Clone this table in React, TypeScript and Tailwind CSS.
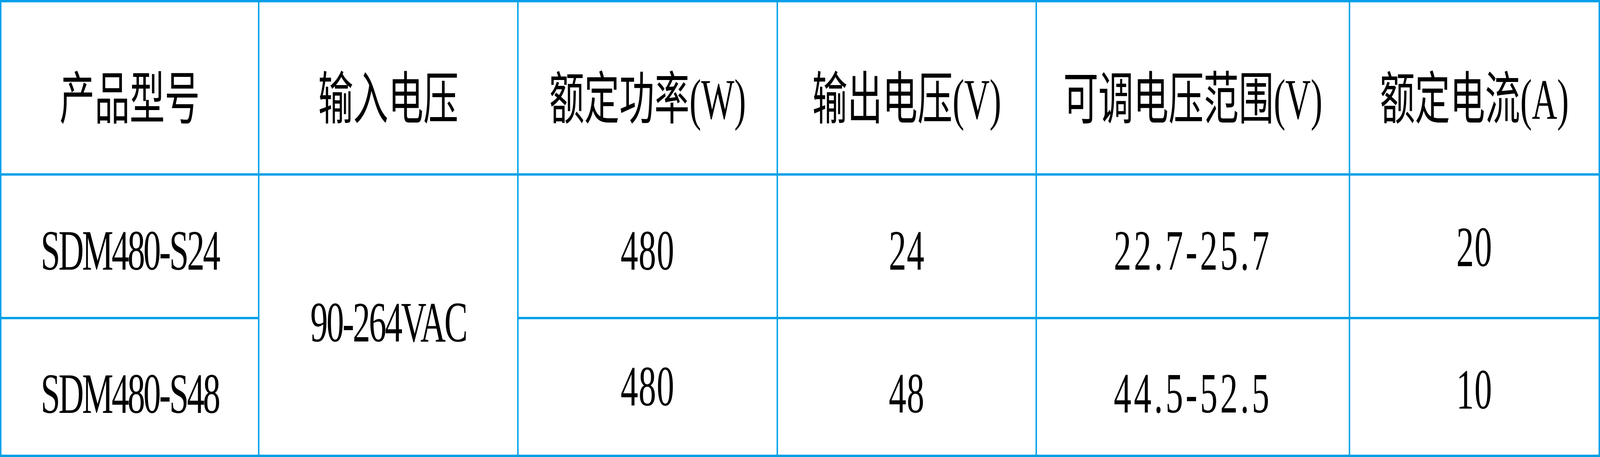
import React, { useLayoutEffect, useState } from "react"

const font = { fontFamily: '"Liberation Serif", "Noto Sans CJK SC", serif' }

const headers = ["产品型号", "输入电压", "额定功率(W)", "输出电压(V)", "可调电压范围(V)", "额定电流(A)"]

function Cell({ children, className = "" }: { children: React.ReactNode; className?: string }) {
  return (
    <div className={"bg-white flex items-center justify-center text-black text-[146px] leading-none whitespace-nowrap " + className}>
      {children}
    </div>
  )
}

export default function App() {
  // the table is drawn at 6661px wide; squeeze it to the window if that is narrower
  const [sx, setSx] = useState(1)
  useLayoutEffect(() => {
    const fit = () => setSx(Math.min(1, window.innerWidth / 6661))
    fit()
    window.addEventListener("resize", fit)
    return () => window.removeEventListener("resize", fit)
  }, [])

  return (
    <div className="w-screen h-[1171px] overflow-hidden bg-white" style={font}>
      <div className="w-[6661px] origin-top-left" style={{ transform: `scaleX(${sx})` }}>
        <div className="grid grid-cols-[1068px_1073px_1074px_1072px_1298px_1034px] grid-rows-[438px_362px_347px] gap-[6px] p-[6px] bg-[#00a0e9]">
          {headers.map((h) => (
            <Cell key={h} className="pt-[60px]">{h}</Cell>
          ))}

          <Cell className="pt-[22px] tracking-[-7px]">SDM480-S24</Cell>
          <Cell className="row-span-2 pt-[36px] tracking-[-6px]">90-264VAC</Cell>
          <Cell className="pt-[22px] tracking-[2px]">480</Cell>
          <Cell className="pt-[22px] tracking-[2px]">24</Cell>
          <Cell className="pt-[22px] tracking-[11px]">22.7-25.7</Cell>
          <Cell className="pt-[4px] tracking-[2px]">20</Cell>

          <Cell className="pt-[34px] tracking-[-7px]">SDM480-S48</Cell>
          <Cell className="pb-[4px] tracking-[2px]">480</Cell>
          <Cell className="pt-[32px] tracking-[2px]">48</Cell>
          <Cell className="pt-[32px] tracking-[11px]">44.5-52.5</Cell>
          <Cell className="pt-[12px] tracking-[2px]">10</Cell>
        </div>
      </div>
    </div>
  )
}
